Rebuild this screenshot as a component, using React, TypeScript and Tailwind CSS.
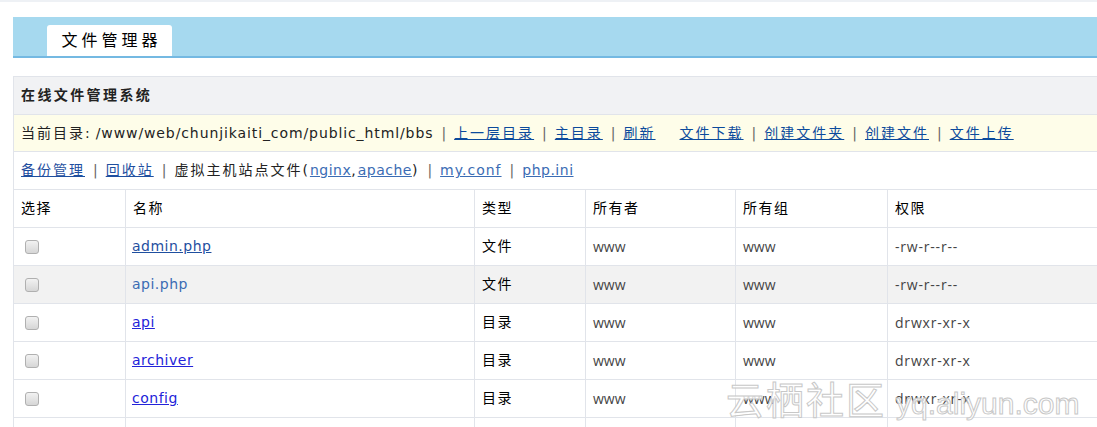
const cjk = "font-['DejaVu_Sans','Noto_Sans_CJK_SC',sans-serif]"

const rows = [
  { name: 'admin.php', type: '文件', perm: '-rw-r--r--', link: 'text-[#1f4f9f] underline', gray: false },
  { name: 'api.php', type: '文件', perm: '-rw-r--r--', link: 'text-[#3b6cb4]', gray: true },
  { name: 'api', type: '目录', perm: 'drwxr-xr-x', link: 'text-[#2323d9] underline', gray: false },
  { name: 'archiver', type: '目录', perm: 'drwxr-xr-x', link: 'text-[#2323d9] underline', gray: false },
  { name: 'config', type: '目录', perm: 'drwxr-xr-x', link: 'text-[#2323d9] underline', gray: false },
  { name: '', type: '', perm: '', link: '', gray: false },
]

const Sep = () => <span className="mx-[8px] tracking-normal text-[#666]">|</span>

const Checkbox = () => (
  <span className="ml-[4px] inline-block h-[14px] w-[14px] rounded-[3px] border border-[#b0b0b0] bg-gradient-to-b from-[#f2f2f2] to-[#d6d6d6]" />
)

export default function App() {
  return (
    <div className={`relative h-[427px] w-[1097px] overflow-hidden bg-white ${cjk} text-[14px] text-black`}>
      <div className="h-[2px] bg-[#eef1f5]" />
      <div className="ml-[13px] mt-[15px] w-[1100px]">
        {/* header bar */}
        <div className="flex h-[41px] items-end border-b-2 border-[#74b9e2] bg-[#a6d9ef] pl-[34px]">
          <div className="flex h-[31px] w-[125px] items-center justify-center rounded-tl-[3px] rounded-tr-[3px] bg-white pl-[4px] text-[16px] tracking-[4px]">
            文件管理器
          </div>
        </div>

        {/* panel */}
        <div className="mt-[18px] border-l border-t border-[#e1e4ea]">
          <div className="flex h-[37px] items-center bg-[#f1f2f4] pl-[7px] text-[14px] font-bold tracking-[2.4px] text-[#222]">
            在线文件管理系统
          </div>
          <div className="flex h-[38px] items-center border-y border-[#e1e4ea] bg-[#fefde9] pl-[7px] tracking-[2px] text-[#222]">
            <span>当前目录:</span>
            <span className="ml-[4px] tracking-[0.9px]">/www/web/chunjikaiti_com/public_html/bbs</span>
            <Sep />
            <a className="text-[#0b4a9c] underline">上一层目录</a>
            <Sep />
            <a className="text-[#0b4a9c] underline">主目录</a>
            <Sep />
            <a className="text-[#0b4a9c] underline">刷新</a>
            <span className="w-[24px]" />
            <a className="text-[#0b4a9c] underline">文件下载</a>
            <Sep />
            <a className="text-[#0b4a9c] underline">创建文件夹</a>
            <Sep />
            <a className="text-[#0b4a9c] underline">创建文件</a>
            <Sep />
            <a className="text-[#0b4a9c] underline">文件上传</a>
          </div>
          <div className="flex h-[37px] items-center pl-[7px] tracking-[2px] text-[#222]">
            <a className="text-[#1f4f9f] underline">备份管理</a>
            <Sep />
            <a className="text-[#1f4f9f] underline">回收站</a>
            <Sep />
            <span>虚拟主机站点文件(</span>
            <a className="text-[#3b6cb4] underline tracking-[0.5px]">nginx</a>
            <span>,</span>
            <a className="text-[#3b6cb4] underline tracking-[0.5px]">apache</a>
            <span>)</span>
            <Sep />
            <a className="text-[#3b6cb4] underline tracking-[1px]">my.conf</a>
            <Sep />
            <a className="text-[#3b6cb4] underline tracking-[0.5px]">php.ini</a>
          </div>

          {/* table */}
          <div className="grid grid-cols-[111px_349px_111px_150px_152px_1fr] border-t border-[#e1e4ea]">
            {['选择', '名称', '类型', '所有者', '所有组', '权限'].map((h, i) => (
              <div
                key={h}
                className={`flex h-[38px] items-center border-b border-[#e1e4ea] pl-[7px] tracking-[1.5px] ${i > 0 ? 'border-l' : ''}`}
              >
                {h}
              </div>
            ))}
            {rows.map((r, idx) => {
              const bg = r.gray ? 'bg-[#f2f2f2]' : 'bg-white'
              const cell = `flex h-[38px] items-center border-b border-[#e1e4ea] pl-[7px] ${bg}`
              return [
                <div key={`c${idx}`} className={cell}>
                  {r.name && <Checkbox />}
                </div>,
                <div key={`n${idx}`} className={`${cell} border-l !pl-[6px]`}>
                  <a className={`font-['DejaVu_Sans',sans-serif] tracking-[0.5px] ${r.link}`}>{r.name}</a>
                </div>,
                <div key={`t${idx}`} className={`${cell} border-l tracking-[1.5px]`}>{r.type}</div>,
                <div key={`o${idx}`} className={`${cell} border-l font-['Open_Sans',sans-serif] text-[#444]`}>
                  {r.name && 'www'}
                </div>,
                <div key={`g${idx}`} className={`${cell} border-l font-['Open_Sans',sans-serif] text-[#444]`}>
                  {r.name && 'www'}
                </div>,
                <div key={`p${idx}`} className={`${cell} border-l font-['Open_Sans',sans-serif] tracking-[0.8px] text-[#444]`}>
                  {r.perm}
                </div>,
              ]
            })}
          </div>
        </div>
      </div>

      {/* watermark */}
      <div className="pointer-events-none absolute left-[726px] top-[376px] flex items-baseline gap-[10px] leading-[44px] text-white/80 [-webkit-text-stroke:1px_#c8c8c8]">
        <span className="font-['Noto_Sans_CJK_SC',sans-serif] text-[38px] tracking-[2px]">云栖社区</span>
        <span className="font-['Liberation_Sans',sans-serif] text-[30px]">yq.aliyun.com</span>
      </div>
    </div>
  )
}
